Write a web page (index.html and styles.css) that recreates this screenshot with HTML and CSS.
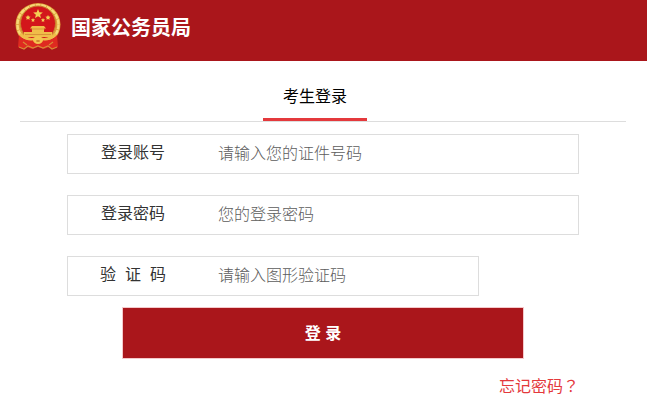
FILE: index.html
```html
<!DOCTYPE html>
<html lang="zh-CN">
<head>
<meta charset="utf-8">
<meta name="viewport" content="width=device-width, initial-scale=1">
<title>国家公务员局</title>
<link rel="stylesheet" href="styles.css">
</head>
<body>
<header class="site-header">
  <svg class="emblem" viewBox="0 0 46 48" aria-hidden="true">
    <ellipse cx="23" cy="22.500" rx="22.500" ry="21.500" fill="#dd9c38"/>
    <ellipse cx="23" cy="22.500" rx="20.500" ry="19.500" fill="none" stroke="#f6d877" stroke-width="2.500" stroke-dasharray="5 .7"/>
    <ellipse cx="23" cy="21.500" rx="17.500" ry="17.500" fill="#d3161b" stroke="#c98030"/>
    <path fill="#f3cf55" d="M23 7l1.300 3.300 3.500.2-2.700 2.200.9 3.400-3-1.900-3 1.900.9-3.400-2.700-2.200 3.500-.2zM13 13l.8 1.600 1.800.2-1.300 1.200.4 1.800-1.700-.9-1.600.9.3-1.800-1.300-1.200 1.800-.2zM33 13l.8 1.600 1.800.2-1.300 1.200.4 1.800-1.700-.9-1.600.9.3-1.800-1.300-1.200 1.800-.2zM18 16l.6 1.300 1.500.2-1.100 1 .3 1.500-1.300-.7-1.300.7.300-1.500-1.100-1 1.500-.2zM28 16l.6 1.300 1.500.2-1.100 1 .3 1.500-1.300-.7-1.300.7.300-1.500-1.100-1 1.500-.2z"/>
    <path fill="#f0bd49" d="M17 24h12l2 2.500h-2V30h8v5H9v-5h8v-3.500h-2z"/>
    <path fill="none" stroke="#cf8230" stroke-width=".7" d="M16 27h14M10 32.500h26"/>
    <path fill="#df2a20" d="M4 33q5 6 14 5l5 3 5-3q9 1 14-5l1 12-5 2-4-2-5 2-6-2-6 2-5-2-4 2-5-2z"/>
    <path fill="none" stroke="#f0bd49" stroke-width="2.500" d="M5 32q6 6 14 5M41 32q-6 6-14 5"/>
    <path fill="none" stroke="#d98a35" stroke-width="1.200" d="M4 45l5 2 4-3 5 2 5-2 5 2 5-2 4 3 5-2M8 40l4 3M38 40l-4 3"/>
    <ellipse cx="23" cy="38" rx="5" ry="4" fill="#f3c64f"/>
    <ellipse cx="23" cy="39" rx="2" ry="1" fill="#cf8230"/>
  </svg>
  <h1 class="site-title">国家公务员局</h1>
</header>
<main class="panel">
  <nav class="tabs"><a class="tab" href="#login">考生登录</a></nav>
  <form class="form" id="login">
    <div class="field">
      <label class="label" for="account">登录账号</label>
      <input class="input" id="account" type="text" placeholder="请输入您的证件号码">
    </div>
    <div class="field">
      <label class="label" for="password">登录密码</label>
      <input class="input" id="password" type="password" placeholder="您的登录密码">
    </div>
    <div class="field field-short">
      <label class="label" for="captcha">验&nbsp; 证&nbsp; 码</label>
      <input class="input" id="captcha" type="text" placeholder="请输入图形验证码">
    </div>
    <button class="submit" type="submit">登 录</button>
    <a class="forgot" href="#forgot">忘记密码<span class="mark" lang="zh-TW">？</span></a>
  </form>
</main>
</body>
</html>
```
FILE: styles.css
```css
* {
  box-sizing: border-box;
}

body {
  margin: 0;
  background: #fff;
  color: #333;
  font: 16px/24px "Liberation Sans", "Noto Sans CJK SC", sans-serif;
}

.site-header {
  display: flex;
  align-items: center;
  gap: 10px;
  padding: 2px 15px 8px;
  height: 61px;
  background: #aa161b;
}

.emblem {
  align-self: flex-start;
  width: 46px;
  height: 48px;
}

.site-title {
  margin: 0;
  color: #fff;
  font-size: 20px;
  line-height: 28px;
}

.panel {
  margin: 0 21px 0 20px;
}

.tabs {
  display: flex;
  justify-content: center;
  padding: 20px 16px 0 0;
  border-bottom: 1px solid #ddd;
}

.tab {
  padding: 4px 20px 9px;
  border-bottom: 3px solid #e4393c;
  color: #000;
  text-decoration: none;
}

.form {
  display: flex;
  flex-direction: column;
  max-width: 512px;
  margin: 12px auto 0;
}

.field {
  display: flex;
  height: 40px;
  margin-bottom: 21px;
  border: 1px solid #ddd;
}

.field-short {
  width: 412px;
  max-width: 100%;
  margin-bottom: 11px;
}

.label {
  flex: 0 0 130px;
  line-height: 36px;
  text-align: center;
}

.input {
  flex: 1;
  min-width: 0;
  padding: 0 20px;
  border: 0;
  background: transparent;
  color: #333;
  font: inherit;
}

.input::placeholder {
  color: #5c5c5c;
  font-weight: 300;
  opacity: 1;
}

.submit {
  align-self: center;
  width: 402px;
  max-width: 100%;
  height: 52px;
  padding: 2px 0 0;
  border: 1px solid #f5c9cb;
  background: #aa161b;
  color: #fff;
  font: inherit;
  font-weight: 700;
}

.forgot {
  align-self: flex-end;
  margin-top: 14px;
  color: #e4393c;
  text-decoration: none;
}

.mark {
  font-family: "Noto Sans CJK TC", sans-serif;
}
```
